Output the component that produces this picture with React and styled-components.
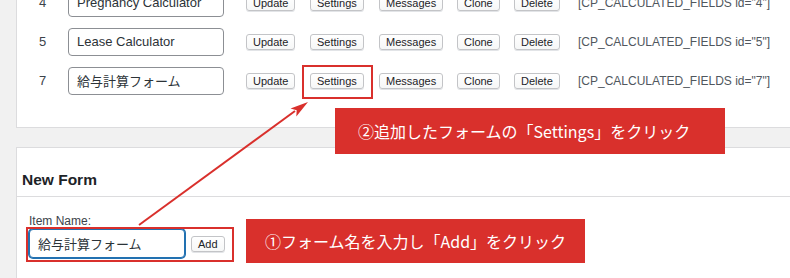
import styled, { createGlobalStyle } from "styled-components";

const GlobalStyle = createGlobalStyle`
  html, body {
    margin: 0;
    padding: 0;
    background: #f1f1f1;
  }
  body {
    font-family: "Liberation Sans", Arial, "Noto Sans CJK JP", sans-serif;
    color: #1d2327;
  }
`;

const RED = "#d9302c";

const Page = styled.div`
  position: relative;
  width: 790px;
  height: 278px;
  overflow: hidden;
  padding-left: 16px;
  box-sizing: border-box;
`;

const Panel = styled.div`
  background: #fff;
  border: 1px solid #dcdcde;
  border-right: none;
`;

const ListPanel = styled(Panel)`
  margin-top: -17px;
  border-top: none;
  padding-bottom: 27px;
`;

const Row = styled.div`
  display: grid;
  grid-template-columns: 29px 178px 64px 69px 78px 57px 64px auto;
  align-items: center;
  height: 39px;
  padding-left: 22px;
`;

const Num = styled.span`
  font-size: 13px;
  color: #3c434a;
`;

const TextBox = styled.div`
  width: 156px;
  height: ${p => p.$h || 28}px;
  box-sizing: border-box;
  border: 1px solid ${p => (p.$focus ? "#2271b1" : "#8c8f94")};
  box-shadow: ${p => (p.$focus ? "0 0 0 1px #2271b1" : "none")};
  border-radius: 4px;
  padding: 0 8px;
  display: flex;
  align-items: center;
  font-size: 13px;
  color: #2c3338;
  white-space: nowrap;
  background: #fff;
`;

const Button = styled.span`
  justify-self: start;
  display: inline-flex;
  align-items: center;
  justify-content: center;
  height: 16px;
  box-sizing: border-box;
  padding: 0 6px;
  font-size: 11px;
  color: #1d2327;
  background: linear-gradient(#fff, #f6f7f7);
  border: 1px solid #c3c4c7;
  border-radius: 3px;
  box-shadow: 0 1px 0 #e2e4e7;
  white-space: nowrap;
`;

const Code = styled.span`
  font-size: 12px;
  color: #50575e;
  white-space: nowrap;
`;

const FormPanel = styled(Panel)`
  margin-top: 19px;
  height: 200px;
`;

const PanelHead = styled.div`
  height: 49px;
  border-bottom: 1px solid #dcdcde;
  display: flex;
  align-items: flex-end;
  padding: 0 0 7px 5px;
  box-sizing: border-box;
`;

const Title = styled.h2`
  margin: 0;
  font-size: 15.5px;
  font-weight: 700;
  color: #1d2327;
`;

const PanelBody = styled.div`
  padding: 18px 12px 0;
`;

const Label = styled.div`
  font-size: 12px;
  color: #3c434a;
  line-height: 13px;
  margin-bottom: 1px;
`;

const AddRow = styled.div`
  display: flex;
  align-items: center;
  gap: 6px;
  height: 29px;
`;

const Frame = styled.div`
  position: absolute;
  border: 2px solid ${RED};
  box-sizing: border-box;
  pointer-events: none;
`;

const Callout = styled.div`
  position: absolute;
  background: ${RED};
  color: #fff;
  font-family: "Noto Sans CJK JP", "Liberation Sans", sans-serif;
  font-weight: 400;
  font-size: 16px;
  display: flex;
  align-items: center;
  box-sizing: border-box;
  padding-left: ${p => p.$pad}px;
  white-space: nowrap;
`;

const Overlay = styled.svg`
  position: absolute;
  left: 0;
  top: 0;
  pointer-events: none;
`;

const buttons = ["Update", "Settings", "Messages", "Clone", "Delete"];

const forms = [
  { id: "4", name: "Pregnancy Calculator" },
  { id: "5", name: "Lease Calculator" },
  { id: "7", name: "給与計算フォーム" },
];

export default function App() {
  return (
    <Page>
      <GlobalStyle />
      <ListPanel>
        {forms.map(f => (
          <Row key={f.id}>
            <Num>{f.id}</Num>
            <TextBox>{f.name}</TextBox>
            {buttons.map(b => (
              <Button key={b}>{b}</Button>
            ))}
            <Code>[CP_CALCULATED_FIELDS id="{f.id}"]</Code>
          </Row>
        ))}
      </ListPanel>

      <FormPanel>
        <PanelHead>
          <Title>New Form</Title>
        </PanelHead>
        <PanelBody>
          <Label>Item Name:</Label>
          <AddRow>
            <TextBox $focus $h={29}>給与計算フォーム</TextBox>
            <Button>Add</Button>
          </AddRow>
        </PanelBody>
      </FormPanel>

      <Frame style={{ left: 302, top: 65, width: 71, height: 34 }} />
      <Frame style={{ left: 26, top: 227, width: 208, height: 35 }} />

      <Callout $pad={23} style={{ left: 335, top: 108, width: 390, height: 46 }}>
        ②追加したフォームの「Settings」をクリック
      </Callout>
      <Callout $pad={19} style={{ left: 246, top: 219, width: 339, height: 44 }}>
        ①フォーム名を入力し「Add」をクリック
      </Callout>

      <Overlay width="790" height="278" viewBox="0 0 790 278">
        <line x1="139" y1="225" x2="295" y2="111" stroke={RED} strokeWidth="2" />
        <polygon points="308,102 296.3,116.6 296.7,110.2 290.5,108.6" fill={RED} />
      </Overlay>
    </Page>
  );
}
